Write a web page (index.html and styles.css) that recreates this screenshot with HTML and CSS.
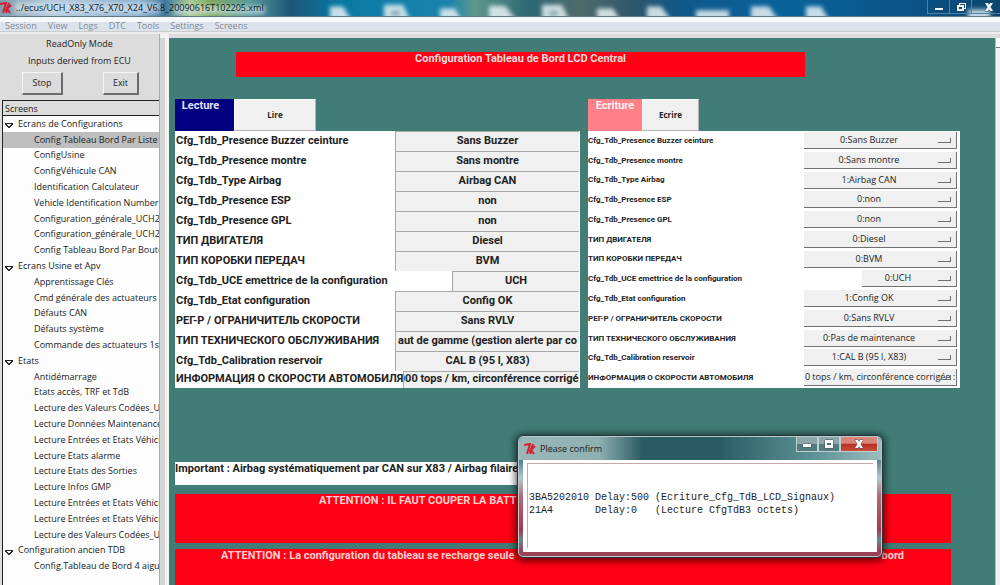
FILE: index.html
```html
<!DOCTYPE html>
<html lang="fr">
<head>
<meta charset="utf-8">
<title>../ecus/UCH_X83_X76_X70_X24_V6.8_20090616T102205.xml</title>
<link rel="stylesheet" href="styles.css">
</head>
<body>
<header class="titlebar">
  <svg class="desktop" viewBox="0 0 1000 17" preserveAspectRatio="none" aria-hidden="true">
    <defs>
      <linearGradient id="sky" x1="0" x2="1" y1="0" y2="0">
        <stop offset="0" stop-color="#7d9dad"/><stop offset=".05" stop-color="#b3c8da"/><stop offset=".14" stop-color="#8bb0cf"/>
        <stop offset=".165" stop-color="#40779c"/><stop offset=".19" stop-color="#a9cb93"/><stop offset=".21" stop-color="#7faa5c"/>
        <stop offset=".25" stop-color="#569a9b"/><stop offset=".29" stop-color="#1d5578"/><stop offset=".34" stop-color="#0879a4"/>
        <stop offset=".45" stop-color="#1b84ad"/><stop offset=".475" stop-color="#5f988b"/><stop offset=".53" stop-color="#2c6674"/>
        <stop offset=".58" stop-color="#4f6c6b"/><stop offset=".63" stop-color="#30576c"/><stop offset=".68" stop-color="#10578a"/>
        <stop offset=".78" stop-color="#09639b"/><stop offset=".9" stop-color="#09558a"/><stop offset="1" stop-color="#0b456f"/>
      </linearGradient>
      <filter id="soft" x="-5%" y="-50%" width="110%" height="200%"><feGaussianBlur stdDeviation="2"/></filter>
    </defs>
    <rect width="1000" height="17" fill="url(#sky)"/>
    <g filter="url(#soft)">
      <path fill="#e9f2f5" opacity=".85" d="M330 7h13l8 14h-21zM384 5h19l7 16h-26zM440 9h15l6 12h-21zM489 6h16l11 15h-27zM542 5h20l7 16h-27zM597 9h16l7 12h-23zM647 7h14l10 14h-24zM696 11h33v10h-33zM751 7h18l9 14h-27zM806 7h15l8 14h-23zM968 10h22v11h-22z"/>
      <path fill="#4c8f9c" d="M391 12h9v4h-9zM549 12h9v4h-9z"/>
      <path fill="#dbe9f5" opacity=".6" d="M15 3h145v11H15zM174 6h91v9h-91z"/>
    </g>
  </svg>
  <svg class="tk" viewBox="0 0 12 12" aria-hidden="true"><path d="M0 2l6-1-3 10M6 11l3-10-2 5 4-3-4 4 3 4"/></svg>
  <span class="caption">../ecus/UCH_X83_X76_X70_X24_V6.8_20090616T102205.xml</span>
  <div class="controls">
    <button aria-label="Minimize"><svg viewBox="0 0 10 10"><path d="M1 6h8v2H1z"/></svg></button>
    <button aria-label="Restore"><svg viewBox="0 0 10 10"><path fill-rule="evenodd" d="M1 3h2V1h7v6H8v2H1zM4 2v1h4v3h1V2zM3 5v2h3V5z"/></svg></button>
    <button class="wide" aria-label="Close"><svg viewBox="0 0 10 10"><path d="M1 1h3l1 2 1-2h3L6.500 5 9 9H6L5 7 4 9H1l2.500-4z"/></svg></button>
  </div>
</header>
<nav class="menu">
  <button>Session</button><button>View</button><button>Logs</button><button>DTC</button><button>Tools</button><button>Settings</button><button>Screens</button>
</nav>
<div class="body">
  <aside class="side">
    <p>ReadOnly Mode</p>
    <p>Inputs derived from ECU</p>
    <div class="actions"><button>Stop</button><button class="exit">Exit</button></div>
    <h2>Screens</h2>
    <ul class="tree">
      <li class="group">Ecrans de Configurations</li>
      <li class="on">Config Tableau Bord Par Liste</li>
      <li>ConfigUsine</li>
      <li>ConfigVéhicule CAN</li>
      <li>Identification Calculateur</li>
      <li>Vehicle Identification Number</li>
      <li>Configuration_générale_UCH2</li>
      <li>Configuration_générale_UCH2</li>
      <li>Config Tableau Bord Par Bouton</li>
      <li class="group">Ecrans Usine et Apv</li>
      <li>Apprentissage Clés</li>
      <li>Cmd générale des actuateurs</li>
      <li>Défauts CAN</li>
      <li>Défauts système</li>
      <li>Commande des actuateurs 1s</li>
      <li class="group">Etats</li>
      <li>Antidémarrage</li>
      <li>Etats accès, TRF et TdB</li>
      <li>Lecture des Valeurs Codées_UCH</li>
      <li>Lecture Données Maintenance</li>
      <li>Lecture Entrées et Etats Véhicule</li>
      <li>Lecture Etats alarme</li>
      <li>Lecture Etats des Sorties</li>
      <li>Lecture Infos GMP</li>
      <li>Lecture Entrées et Etats Véhicule</li>
      <li>Lecture Entrées et Etats Véhicule</li>
      <li>Lecture des Valeurs Codées_UCH</li>
      <li class="group">Configuration ancien TDB</li>
      <li>Config.Tableau de Bord 4 aiguilles</li>
    </ul>
  </aside>
  <div class="sash"></div>
  <main class="main">
    <h1 class="banner">Configuration Tableau de Bord LCD Central</h1>
    <div class="panels">
      <section class="read">
        <div class="tabs"><h2>Lecture</h2><button>Lire</button></div>
        <dl class="rows">
          <div><dt>Cfg_Tdb_Presence Buzzer ceinture</dt><dd>Sans Buzzer</dd></div>
          <div><dt>Cfg_Tdb_Presence montre</dt><dd>Sans montre</dd></div>
          <div><dt>Cfg_Tdb_Type Airbag</dt><dd>Airbag CAN</dd></div>
          <div><dt>Cfg_Tdb_Presence ESP</dt><dd>non</dd></div>
          <div><dt>Cfg_Tdb_Presence GPL</dt><dd>non</dd></div>
          <div><dt>ТИП ДВИГАТЕЛЯ</dt><dd>Diesel</dd></div>
          <div><dt>ТИП КОРОБКИ ПЕРЕДАЧ</dt><dd>BVM</dd></div>
          <div class="short"><dt>Cfg_Tdb_UCE emettrice de la configuration</dt><dd>UCH</dd></div>
          <div><dt>Cfg_Tdb_Etat configuration</dt><dd>Config OK</dd></div>
          <div><dt>РЕГ-Р / ОГРАНИЧИТЕЛЬ СКОРОСТИ</dt><dd>Sans RVLV</dd></div>
          <div><dt>ТИП ТЕХНИЧЕСКОГО ОБСЛУЖИВАНИЯ</dt><dd>aut de gamme (gestion alerte par co</dd></div>
          <div><dt>Cfg_Tdb_Calibration reservoir</dt><dd>CAL B (95 l, X83)</dd></div>
          <div class="last"><dt>ИНФОРМАЦИЯ О СКОРОСТИ АВТОМОБИЛЯ</dt><dd>000 tops / km, circonférence corrigée</dd></div>
        </dl>
      </section>
      <section class="write">
        <div class="tabs"><h2>Ecriture</h2><button>Ecrire</button></div>
        <div class="rows">
          <div><label for="s1">Cfg_Tdb_Presence Buzzer ceinture</label><span class="pick"><select id="s1"><option>0:Sans Buzzer</option></select></span></div>
          <div><label for="s2">Cfg_Tdb_Presence montre</label><span class="pick"><select id="s2"><option>0:Sans montre</option></select></span></div>
          <div><label for="s3">Cfg_Tdb_Type Airbag</label><span class="pick"><select id="s3"><option>1:Airbag CAN</option></select></span></div>
          <div><label for="s4">Cfg_Tdb_Presence ESP</label><span class="pick"><select id="s4"><option>0:non</option></select></span></div>
          <div><label for="s5">Cfg_Tdb_Presence GPL</label><span class="pick"><select id="s5"><option>0:non</option></select></span></div>
          <div><label for="s6">ТИП ДВИГАТЕЛЯ</label><span class="pick"><select id="s6"><option>0:Diesel</option></select></span></div>
          <div><label for="s7">ТИП КОРОБКИ ПЕРЕДАЧ</label><span class="pick"><select id="s7"><option>0:BVM</option></select></span></div>
          <div class="short"><label for="s8">Cfg_Tdb_UCE emettrice de la configuration</label><span class="pick"><select id="s8"><option>0:UCH</option></select></span></div>
          <div><label for="s9">Cfg_Tdb_Etat configuration</label><span class="pick"><select id="s9"><option>1:Config OK</option></select></span></div>
          <div><label for="s10">РЕГ-Р / ОГРАНИЧИТЕЛЬ СКОРОСТИ</label><span class="pick"><select id="s10"><option>0:Sans RVLV</option></select></span></div>
          <div><label for="s11">ТИП ТЕХНИЧЕСКОГО ОБСЛУЖИВАНИЯ</label><span class="pick"><select id="s11"><option>0:Pas de maintenance</option></select></span></div>
          <div><label for="s12">Cfg_Tdb_Calibration reservoir</label><span class="pick"><select id="s12"><option>1:CAL B (95 l, X83)</option></select></span></div>
          <div class="full"><label for="s13">ИНФОРМАЦИЯ О СКОРОСТИ АВТОМОБИЛЯ</label><span class="pick"><select id="s13"><option>0 tops / km, circonférence corrigée :</option></select></span></div>
        </div>
      </section>
    </div>
    <p class="note">Important : Airbag systématiquement par CAN sur X83 / Airbag filaire</p>
    <p class="warn battery">ATTENTION : IL FAUT COUPER LA BATT</p>
    <p class="warn reload"><span>ATTENTION : La configuration du tableau se recharge seule</span><span>bord</span></p>
  </main>
  <div class="scroll"></div>
</div>
<div class="dialog" role="dialog" aria-label="Please confirm">
  <div class="dialog-bar">
    <svg class="tk" viewBox="0 0 12 12" aria-hidden="true"><path d="M0 2l6-1-3 10M6 11l3-10-2 5 4-3-4 4 3 4"/></svg>
    <span>Please confirm</span>
    <div class="dialog-controls">
      <button aria-label="Minimize"><svg viewBox="0 0 10 10"><path d="M1 5h8v3H1z"/></svg></button>
      <button aria-label="Maximize"><svg viewBox="0 0 10 10"><path fill-rule="evenodd" d="M1 1h8v8H1zM3 4v2h4V4z"/></svg></button>
      <button class="close" aria-label="Close"><svg viewBox="0 0 10 10"><path d="M1 1h3l1 2 1-2h3L6.500 5 9 9H6L5 7 4 9H1l2.500-4z"/></svg></button>
    </div>
  </div>
  <div class="dialog-body"><pre>3BA5202010 Delay:500 (Ecriture_Cfg_TdB_LCD_Signaux)
21A4       Delay:0   (Lecture CfgTdB3 octets)</pre></div>
</div>
</body>
</html>
```
FILE: styles.css
```css
* { box-sizing: border-box; }
body {
  margin: 0;
  height: 100vh;
  display: flex;
  flex-direction: column;
  overflow: hidden;
  background: #dcdcdc;
  color: #222;
  font: 9px/12px "Open Sans", "Noto Sans", sans-serif;
}
h1, h2, p, ul, dl, dd, pre { margin: 0; padding: 0; }
h1, h2 { font-size: inherit; }
button { border: 0; padding: 0; background: none; font: inherit; color: inherit; }

.titlebar {
  position: relative;
  flex: none;
  height: 17px;
  display: flex;
  align-items: center;
  border-bottom: 1px solid #5b7884;
  overflow: hidden;
}
.desktop { position: absolute; inset: 0; width: 100%; height: 100%; }
.tk { position: relative; width: 12px; height: 12px; fill: none; stroke: #d41f31; stroke-width: 2; }
.caption { position: relative; margin-left: 4px; color: #101820; }
.controls { position: relative; margin-left: auto; display: flex; align-self: flex-start; height: 14px; }
.controls button { width: 22px; height: 14px; border: 1px solid #4b83a6; border-top: 0; border-right: 0; }
.controls .wide { width: 29px; padding-left: 6px; }
.controls svg { display: block; width: 10px; height: 10px; margin: auto; fill: #f2f6f8; stroke: #24455c; stroke-width: 1; paint-order: stroke; }

.menu {
  flex: none;
  height: 17px;
  display: flex;
  gap: 11px;
  padding: 0 5px;
  align-items: center;
  background: linear-gradient(#f5f7f9 0 5px, #dce3ec 5px 14px, #c9cdd0 14px 15px, #ececec 15px);
  color: #858a94;
}

.body { flex: 1; min-height: 0; display: flex; }
.side { flex: none; width: 160px; display: flex; flex-direction: column; border-right: 1px solid #aaa; }
.side p { text-align: center; padding-top: 4px; height: 17px; }
.actions { display: flex; justify-content: space-between; padding: 4px 20px 4px 22px; height: 32px; }
.actions button {
  width: 41px;
  height: 23px;
  border: 1px solid;
  border-color: #f6f6f6 #6c6c6c #6c6c6c #f6f6f6;
  border-right-width: 2px;
  border-bottom-width: 2px;
}
.actions .exit { width: 36px; }
.side h2 {
  height: 16px;
  padding-left: 2px;
  margin-left: 2px;
  border: solid #222;
  border-width: 1px 0 1px 1px;
  font-weight: 400;
  line-height: 15px;
}
.tree {
  flex: 1;
  min-height: 0;
  display: flex;
  flex-direction: column;
  margin-left: 2px;
  padding-bottom: 11px;
  border-left: 1px solid #222;
  background: #fdfdfd;
  list-style: none;
}
.tree li { flex: 1; min-height: 0; display: flex; align-items: center; padding-left: 31px; white-space: nowrap; overflow: hidden; }
.tree .on { background: #bebebe; }
.tree .group { padding-left: 2px; gap: 5px; }
.tree .group::before {
  content: "";
  width: 8px;
  height: 5px;
  margin-top: 4px;
  background:
    linear-gradient(#222, #222) top/8px 1px no-repeat,
    linear-gradient(to top right, transparent 40%, #333 41% 59%, transparent 60%) left/4px 5px no-repeat,
    linear-gradient(to top left, transparent 40%, #333 41% 59%, transparent 60%) right/4px 5px no-repeat;
}
.sash { flex: none; width: 9px; border: solid #f4f4f4; border-width: 4px 4px 0 0; background: #d4d4d4; }

.main {
  flex: 1;
  min-width: 0;
  display: flex;
  flex-direction: column;
  margin-top: 4px;
  padding: 14px 35px 0 6px;
  background: #417c76;
  font: bold 11px/14px Roboto, Arial, sans-serif;
}
.banner { flex: none; height: 25px; margin: 0 155px 0 61px; background: #ff0014; color: #f6dcdc; text-align: center; }
.panels { display: grid; grid-template-columns: 405fr 372fr; gap: 8px; margin-top: 22px; }
section { display: flex; flex-direction: column; min-width: 0; }
.tabs { display: flex; height: 32px; }
.tabs h2 { width: 59px; text-align: center; padding-right: 8px; color: #e4e4ff; background: #000080; }
.tabs button { width: 82px; border: 1px solid #fafafa; border-right-color: #b4b4b4; border-bottom-color: #b4b4b4; background: #f0f0f0; font: bold 8px/12px "Open Sans", sans-serif; }
.write .tabs h2 { width: 54px; padding: 0; color: #fff0f0; background: #ff8088; }
.write .tabs button { width: 57px; }
.rows { flex: 1; display: flex; flex-direction: column; background: #fff; }
.rows > div { display: flex; align-items: stretch; justify-content: space-between; white-space: nowrap; }
.read .rows { border-left: 1px solid #fff; }
.read .rows > div { height: 20px; }
.read dt { line-height: 20px; }
.read dd {
  width: 184px;
  display: flex;
  justify-content: center;
  overflow: hidden;
  margin-right: 1px;
  border: solid #a8a8a8;
  border-width: 1px 0 0 1px;
  background: #f0f0f0;
  line-height: 18px;
}
.read .rows .short dd { width: 127px; }
.read .rows .last { height: 17px; }
.read .last dt { line-height: 15px; }
.read .last dd { line-height: 14px; }

.write .rows { padding-right: 3px; }
.write .rows > div { flex: 1; min-height: 0; }
.write label { align-self: center; font-size: 8px; line-height: 12px; }
.pick { position: relative; width: 153px; height: 17px; margin: 1px 0; }
.short .pick { width: 95px; }
.pick select {
  appearance: none;
  display: block;
  width: 100%;
  height: 100%;
  border: 0 solid #707070;
  border-width: 0 1px 1px 0;
  border-radius: 0;
  background: #f0f0f0;
  padding: 0 22px 0 0;
  color: #222;
  font: 9px/12px "Open Sans", sans-serif;
  text-align: center;
  text-align-last: center;
}
.full .pick select { padding: 0; }
.pick::after { content: ""; position: absolute; right: 6px; bottom: 6px; width: 12px; height: 4px; border: solid #707070; border-width: 0 1px 1px 0; pointer-events: none; }

.note { width: 50%; height: 23px; margin-top: 74px; background: #fff; white-space: nowrap; }
.warn { height: 49px; margin: 9px 9px 0 0; background: #ff0014; color: #ffd0d0; white-space: nowrap; }
.battery { padding-left: 144px; }
.reload { flex: 1; margin-top: 6px; display: flex; justify-content: space-between; padding: 0 47px 0 46px; }
.scroll { flex: none; width: 5px; margin-top: 4px; border-left: 1px solid #bbb; background: linear-gradient(#fff 0 9px, #777 9px 10px, #f2f2f2 10px); }

.dialog {
  position: absolute;
  left: 517px;
  top: 435px;
  width: 366px;
  height: 123px;
  display: flex;
  flex-direction: column;
  padding: 0 5px 5px;
  border: 1px solid #26343a;
  border-radius: 6px;
  box-shadow: inset 0 0 0 1px #b9cbce, 0 1px 7px 2px rgba(0, 0, 0, .6);
  background: linear-gradient(#5d9296 0, #55868b 25px, #b2c9cd 42px, #b06a75 60px, #a53a50 94px, #638a8d 104px, #9c4256 114px);
}
.dialog-bar { height: 23px; display: flex; align-items: center; margin: 1px -4px 0; padding-left: 5px; gap: 4px; border-radius: 5px 5px 0 0; background: linear-gradient(90deg, #9ab7b8, #8fb0b2 22%, #2a5b63 34%, #2a5b63 55%, #588f92 80%, #9bbcbd); color: #152022; }
.dialog-controls { display: flex; align-self: flex-start; margin-left: auto; margin-right: 3px; }
.dialog-controls button { width: 22px; height: 15px; border: 1px solid #c0d0d1; border-top: 0; background: linear-gradient(#8ba7a9 50%, #527c80 50%); }
.dialog-controls .close { width: 38px; background: linear-gradient(#d98579 45%, #b82c22 50%, #c94e3c); }
.dialog-controls svg { display: block; width: 10px; height: 10px; margin: auto; fill: #fff; stroke: #45555a; stroke-width: 1; paint-order: stroke; }
.dialog-body { flex: 1; padding: 3px 4px 4px; background: #fff; }
.dialog-body pre { height: 100%; padding: 27px 0 0 1px; border: solid #c5a8a8; border-width: 1px 0 0 1px; color: #222; font: 10px/13px "Liberation Mono", monospace; }
```
